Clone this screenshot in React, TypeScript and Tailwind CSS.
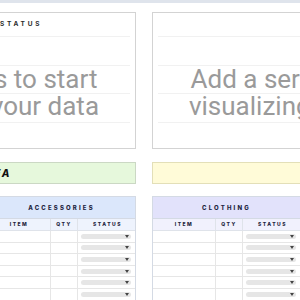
import React from 'react';

const rows = [0, 1, 2, 3, 4, 5];

function ChartCard({ title }: { title?: string }) {
  return (
    <div className="relative h-[137px] border border-[#d3d3d3] bg-white">
      <div className="h-[23px] flex items-center justify-center">
        {title && (
          <span className="font-['Inter',sans-serif] font-bold text-[6.5px] tracking-[0.42em] text-[#2b2b2b]">
            {title}
          </span>
        )}
      </div>
      {/* faint chart gridlines */}
      <div className="px-[5px] flex flex-col">
        <div className="h-[29px] border-t border-[#f1f1f1]" />
        <div className="h-[28px] border-t border-[#f1f1f1]" />
        <div className="h-[29px] border-t border-[#f1f1f1]" />
        <div className="h-[26px] border-t border-[#f1f1f1]" />
      </div>
      <div className="absolute left-0 right-0 top-[23px] bottom-0 flex items-center justify-center">
        <p className="text-center font-['Roboto',sans-serif] text-[26px] leading-[27px] text-[#9a9a9a] pt-[2px]">
          Add a series to start
          <br />
          visualizing your data
        </p>
      </div>
    </div>
  );
}

function Table({ name, head, band }: { name: string; head: string; band: string }) {
  return (
    <div className="w-[149px] shrink-0 border border-[#d4dae4] bg-white font-['Inter',sans-serif]">
      <div className={`h-[22px] flex items-center justify-center border-b border-[#d4dae4] ${band}`}>
        <span className="font-extrabold text-[6px] tracking-[0.36em] text-[#1e2540]">{name}</span>
      </div>
      <div className={`grid grid-cols-[63px_27px_59px] h-[12px] border-b border-[#dfe3ea] ${head}`}>
        <div className="flex items-center justify-center border-r border-[#dfe3ea] font-extrabold text-[5px] tracking-[0.3em] text-[#1e2540]">ITEM</div>
        <div className="flex items-center justify-center border-r border-[#dfe3ea] font-extrabold text-[5px] tracking-[0.3em] text-[#1e2540]">QTY</div>
        <div className="flex items-center justify-center font-extrabold text-[5px] tracking-[0.3em] text-[#1e2540]">STATUS</div>
      </div>
      {rows.map((r) => (
        <div key={r} className="grid grid-cols-[63px_27px_59px] h-[11.6px] border-b border-[#e6e6e6]">
          <div className="border-r border-[#e6e6e6]" />
          <div className="border-r border-[#e6e6e6]" />
          <div className="flex items-center pl-[3px] pr-[6px]">
            <div className="flex-1 h-[5px] rounded-full bg-[#e6e6e6] flex items-center justify-end pr-[2px]">
              <svg width="4" height="3" viewBox="0 0 4 3">
                <path d="M0 0 L4 0 L2 3 Z" fill="#444" />
              </svg>
            </div>
          </div>
        </div>
      ))}
    </div>
  );
}

export default function App() {
  return (
    <div className="w-[300px] h-[300px] overflow-hidden bg-white">
      <div className="h-[3px] bg-[#dfe4ec]" />
      <div className="ml-[-174px] w-[636px] grid grid-cols-[310px_310px] gap-x-4 pt-[9px]">
        <ChartCard title="ACCESSORIES STATUS" />
        <ChartCard />

        <div className="mt-[13px] h-[22px] border border-[#cbd8c4] bg-[#e6f8dc] flex items-center justify-center">
          <span className="font-['Inter',sans-serif] font-extrabold italic text-[10px] tracking-[0.12em] text-[#111] ml-[18px]">
            KOREA
          </span>
        </div>
        <div className="mt-[13px] h-[22px] border border-[#e3dfb8] bg-[#fffbd8]" />

        <div className="mt-[12px] flex justify-between">
          <Table name="SHOES" band="bg-[#fde2e2]" head="bg-[#fdf0f0]" />
          <Table name="ACCESSORIES" band="bg-[#dbe7fb]" head="bg-[#eef3fd]" />
        </div>
        <div className="mt-[12px] flex justify-between">
          <Table name="CLOTHING" band="bg-[#e2e2fb]" head="bg-[#f1f1fd]" />
          <Table name="TOILETRIES" band="bg-[#e2f4fb]" head="bg-[#f1f9fd]" />
        </div>
      </div>
    </div>
  );
}
